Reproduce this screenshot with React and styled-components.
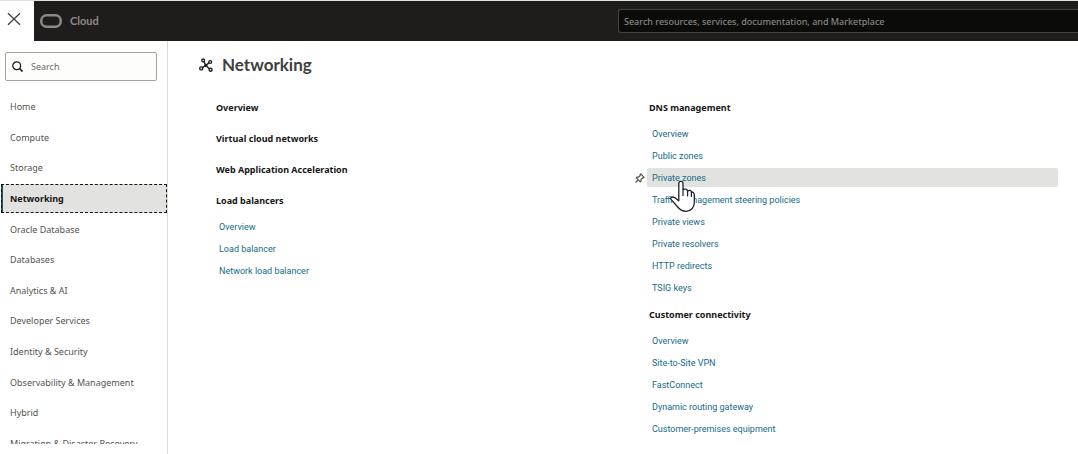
import React from "react";
import styled, { createGlobalStyle } from "styled-components";

const GlobalStyle = createGlobalStyle`
  *, *::before, *::after { box-sizing: border-box; }
  body {
    margin: 0;
    background: #fff;
    color: #161513;
    font-family: "Noto Sans", "Open Sans", sans-serif;
    font-size: 9px;
    line-height: 16px;
  }
  ul, h1, h2 { margin: 0; padding: 0; }
  ul { list-style: none; }
`;

const Page = styled.div`
  display: flex;
  flex-direction: column;
  height: 100vh;
  overflow: hidden;
  border-top: 1px solid #dfe3df;
`;

const TopBar = styled.header`
  display: flex;
  flex: none;
  height: 40px;
  background: #1e1d1b;
`;

const CloseButton = styled.button`
  display: flex;
  align-items: center;
  flex: none;
  width: 34px;
  padding: 0 0 5px 7px;
  border: 0;
  background: #fff;
  color: #3c3b39;
`;

const Brand = styled.a`
  display: flex;
  flex: 1;
  align-items: center;
  gap: 8px;
  padding-left: 6px;
  color: #8b8a88;
  font-family: Lato, sans-serif;
  font-size: 11px;
  font-weight: 700;
  text-decoration: none;
`;

const GlobalSearch = styled.input`
  align-self: center;
  width: 460px;
  height: 24px;
  padding: 0 5px;
  border: 1px solid #454442;
  border-right: 0;
  border-radius: 3px 0 0 3px;
  background: #0b0b0a;
  color: #c4c3c1;
  font: 500 9px "Noto Sans", sans-serif;
  &::placeholder { color: #868583; opacity: 1; }
`;

const Body = styled.div`
  display: flex;
  flex: 1;
  min-height: 0;
`;

const Sidebar = styled.nav`
  display: flex;
  flex: none;
  flex-direction: column;
  width: 168px;
  padding: 11px 0 10px;
  border-right: 1px solid #dcdbda;
`;

const SearchBox = styled.label`
  display: flex;
  align-items: center;
  flex: none;
  gap: 8px;
  height: 29px;
  margin: 0 10px 11px 5px;
  padding-left: 6px;
  border: 1px solid #a3a2a0;
  border-radius: 2px;
  background: #fdfdfb;
`;

const SearchInput = styled.input`
  flex: 1;
  min-width: 0;
  padding: 0;
  border: 0;
  background: transparent;
  font: 9px "Noto Sans", sans-serif;
  &::placeholder { color: #6b6a67; opacity: 1; }
`;

const MenuViewport = styled.div`
  flex: 1;
  min-height: 0;
  overflow: hidden;
`;

const Menu = styled.ul`
  display: flex;
  flex-direction: column;
  justify-content: space-between;
  height: 366px;
`;

const MenuLink = styled.a`
  display: block;
  height: 29px;
  margin-left: 1px;
  padding: 0 9px;
  color: ${(p) => (p.$active ? "#161513" : "#55534f")};
  font-weight: ${(p) => (p.$active ? 700 : 400)};
  line-height: 29px;
  text-decoration: none;
  white-space: nowrap;
  ${(p) =>
    p.$active &&
    `
    padding-left: 7px;
    border-left: 2px solid #1c5469;
    background: #e2e2e0;
    outline: 1px dashed #161513;
    outline-offset: -1px;
  `}
`;

const Main = styled.main`
  flex: 1;
  padding: 12px 20px 0 30px;
`;

const Title = styled.h1`
  display: flex;
  align-items: center;
  gap: 8px;
  color: #403f3d;
  font-family: Lato, sans-serif;
  font-size: 17px;
  font-weight: 700;
  line-height: 24px;
`;

const Columns = styled.div`
  display: grid;
  grid-template-columns: 1fr 1fr;
  gap: 22px;
  margin-top: 22px;
  padding-left: 16px;
`;

const Column = styled.div`
  display: flex;
  flex-direction: column;
  gap: 9px;
`;

const GroupTitle = styled.h2`
  height: 22px;
  padding-left: 2px;
  font-size: 9px;
  font-weight: 700;
  line-height: 17px;
`;

const LinkList = styled.ul`
  display: grid;
  gap: 3px;
  margin-top: 3px;
`;

const LinkRow = styled.li`
  position: relative;
  height: 19px;
  padding-left: 5px;
  border-radius: 2px;
  background: ${(p) => (p.$hovered ? "#e2e2e0" : "transparent")};
  font-family: Roboto, sans-serif;
  font-size: 9px;
  line-height: 21px;
`;

const ServiceLink = styled.a`
  color: #136b87;
  text-decoration: none;
`;

const PinButton = styled.button`
  position: absolute;
  top: 5px;
  left: -12px;
  display: flex;
  padding: 0;
  border: 0;
  background: none;
`;

const Pointer = styled.svg`
  position: absolute;
  top: 12px;
  left: 22px;
  z-index: 1;
`;

const menu = [
  "Home", "Compute", "Storage", "Networking", "Oracle Database", "Databases",
  "Analytics & AI", "Developer Services", "Identity & Security",
  "Observability & Management", "Hybrid", "Migration & Disaster Recovery",
];

const columns = [
  [
    { title: "Overview", links: [] },
    { title: "Virtual cloud networks", links: [] },
    { title: "Web Application Acceleration", links: [] },
    { title: "Load balancers", links: ["Overview", "Load balancer", "Network load balancer"] },
  ],
  [
    {
      title: "DNS management",
      links: [
        "Overview", "Public zones", "Private zones", "Traffic management steering policies",
        "Private views", "Private resolvers", "HTTP redirects", "TSIG keys",
      ],
    },
    {
      title: "Customer connectivity",
      links: [
        "Overview", "Site-to-Site VPN", "FastConnect", "Dynamic routing gateway",
        "Customer-premises equipment",
      ],
    },
  ],
];

const CloseIcon = () => (
  <svg width="14" height="14" viewBox="0 0 14 14" aria-hidden="true">
    <path d="M1 1.2 13 12.8M13 1.2 1 12.8" stroke="currentColor" strokeWidth="1.2" fill="none" />
  </svg>
);

const OracleMark = () => (
  <svg width="22" height="14" viewBox="0 0 22 14" aria-hidden="true">
    <rect x="1.3" y="1.3" width="19.4" height="11.4" rx="5.2" fill="none" stroke="#8b8a88" strokeWidth="2.5" />
  </svg>
);

const SearchIcon = () => (
  <svg width="11" height="11" viewBox="0 0 11 11" aria-hidden="true">
    <g fill="none" stroke="#1b1a18" strokeWidth="1.3">
      <circle cx="4.7" cy="4.7" r="3.9" />
      <path d="m7.5 7.5 3 3" strokeWidth="1.6" />
    </g>
  </svg>
);

const NetworkIcon = () => (
  <svg width="16" height="14" viewBox="0 0 16 14" aria-hidden="true">
    <g fill="none" stroke="#22211f" strokeWidth="1.4">
      <circle cx="5.2" cy="2.4" r="1.4" />
      <circle cx="12.2" cy="4" r="1.4" />
      <circle cx="3.2" cy="10.4" r="1.5" />
      <circle cx="12.6" cy="11.8" r="1.5" />
      <path d="M5.9 3.7 7.8 7.4M11 4.9 7.8 7.4M4.5 9.6 7.8 7.4M11.5 10.8 7.8 7.4" />
    </g>
    <circle cx="7.8" cy="7.4" r="1.6" fill="#22211f" />
  </svg>
);

const PinIcon = () => (
  <svg width="10" height="10" viewBox="0 0 10 10" aria-hidden="true">
    <path
      d="M5.7.8 9.2 4.3 8.2 4.9 7.6 4.8 6 6.5 6.1 8 5.3 8.8 1.3 4.8 2.1 4 3.6 4.1 5.2 2.5 5.1 1.6ZM3.3 6.8.5 9.5"
      fill="none" stroke="#4b4a47" strokeWidth="1.1" strokeLinejoin="round"
    />
  </svg>
);

const HandPointer = () => (
  <Pointer width="28" height="34" viewBox="0 0 28 34" aria-hidden="true">
    <path
      d="M9.8 20.8V3.4C9.8.6 14 .6 14 3.4V9.6C15.6 8.6 18.2 9 18.6 11C20.2 9.8 22.2 10.4 22.4 12C24.2 11.8 25.3 13 25.3 15V22.5C25.3 27.4 22 31.3 17 31.3C12.6 31.3 10.6 29.6 8.3 26.5L2 19.4C.7 17.6 3.4 16.2 5.6 17.6Z"
      fill="#fff" stroke="#20202c" strokeWidth="1.3" strokeLinejoin="round"
    />
    <path d="M14 9.6V16M18.6 11V16.5M22.4 12V17" stroke="#20202c" strokeWidth="1.2" fill="none" />
  </Pointer>
);

export default function App() {
  return (
    <Page>
      <GlobalStyle />
      <TopBar>
        <CloseButton type="button" aria-label="Close menu"><CloseIcon /></CloseButton>
        <Brand href="#"><OracleMark />Cloud</Brand>
        <GlobalSearch
          type="text"
          aria-label="Search resources"
          placeholder="Search resources, services, documentation, and Marketplace"
        />
      </TopBar>
      <Body>
        <Sidebar>
          <SearchBox>
            <SearchIcon />
            <SearchInput type="text" aria-label="Search" placeholder="Search" />
          </SearchBox>
          <MenuViewport>
            <Menu>
              {menu.map((name) => (
                <li key={name}>
                  <MenuLink href="#" $active={name === "Networking"}>{name}</MenuLink>
                </li>
              ))}
            </Menu>
          </MenuViewport>
        </Sidebar>
        <Main>
          <Title><NetworkIcon />Networking</Title>
          <Columns>
            {columns.map((groups, i) => (
              <Column key={i}>
                {groups.map(({ title, links }) => (
                  <section key={title}>
                    <GroupTitle>{title}</GroupTitle>
                    {links.length > 0 && (
                      <LinkList>
                        {links.map((link) => {
                          const hovered = link === "Private zones";
                          return (
                            <LinkRow key={link} $hovered={hovered}>
                              {hovered && <PinButton type="button" aria-label="Pin"><PinIcon /></PinButton>}
                              <ServiceLink href="#">{link}</ServiceLink>
                              {hovered && <HandPointer />}
                            </LinkRow>
                          );
                        })}
                      </LinkList>
                    )}
                  </section>
                ))}
              </Column>
            ))}
          </Columns>
        </Main>
      </Body>
    </Page>
  );
}
